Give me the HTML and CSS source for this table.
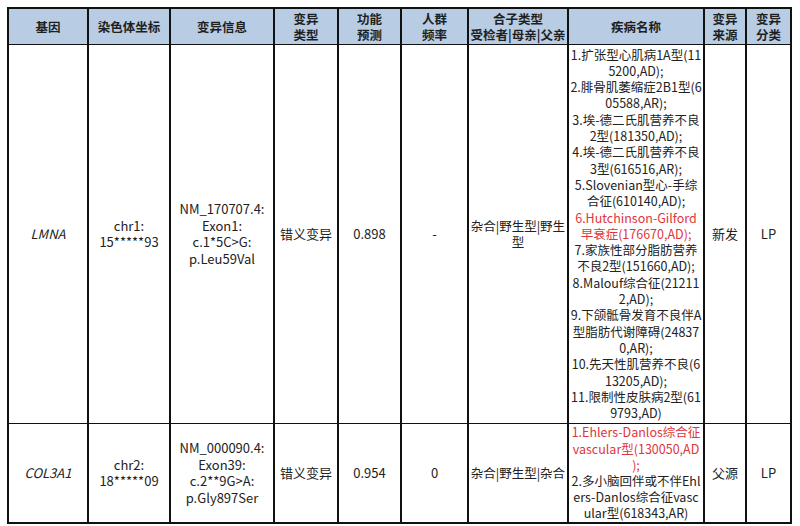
FILE: index.html
```html
<!DOCTYPE html>
<html lang="zh">
<head>
<meta charset="utf-8">
<link rel="stylesheet" href="styles.css">
</head>
<body>
<table class="grid">
<colgroup>
<col class="c1"><col class="c2"><col class="c3"><col class="c4"><col class="c5"><col class="c6"><col class="c7"><col class="c8"><col class="c9"><col class="c10">
</colgroup>
<thead>
<tr>
<th>基因</th>
<th>染色体坐标</th>
<th>变异信息</th>
<th>变异<br>类型</th>
<th>功能<br>预测</th>
<th>人群<br>频率</th>
<th>合子类型<br>受检者|母亲|父亲</th>
<th>疾病名称</th>
<th>变异<br>来源</th>
<th>变异<br>分类</th>
</tr>
</thead>
<tbody>
<tr class="r1">
<td class="gene">LMNA</td>
<td>chr1:<br>15*****93</td>
<td>NM_170707.4:<br>Exon1:<br>c.1*5C&gt;G:<br>p.Leu59Val</td>
<td>错义变异</td>
<td>0.898</td>
<td>-</td>
<td class="zyg">杂合|野生型|野生<br>型</td>
<td class="dis">1.扩张型心肌病1A型(11<br>5200,AD);<br>2.腓骨肌萎缩症2B1型(6<br>05588,AR);<br>3.埃-德二氏肌营养不良<br>2型(181350,AD);<br>4.埃-德二氏肌营养不良<br>3型(616516,AR);<br>5.Slovenian型心-手综<br>合征(610140,AD);<br><span class="red">6.Hutchinson-Gilford<br>早衰症(176670,AD);</span><br>7.家族性部分脂肪营养<br>不良2型(151660,AD);<br>8.Malouf综合征(21211<br>2,AD);<br>9.下颌骶骨发育不良伴A<br>型脂肪代谢障碍(24837<br>0,AR);<br>10.先天性肌营养不良(6<br>13205,AD);<br>11.限制性皮肤病2型(61<br>9793,AD)</td>
<td>新发</td>
<td>LP</td>
</tr>
<tr class="r2">
<td class="gene">COL3A1</td>
<td>chr2:<br>18*****09</td>
<td>NM_000090.4:<br>Exon39:<br>c.2**9G&gt;A:<br>p.Gly897Ser</td>
<td>错义变异</td>
<td>0.954</td>
<td>0</td>
<td class="zyg">杂合|野生型|杂合</td>
<td class="dis"><span class="red">1.Ehlers-Danlos综合征<br>vascular型(130050,AD<br>);</span><br>2.多小脑回伴或不伴Ehl<br>ers-Danlos综合征vasc<br>ular型(618343,AR)</td>
<td>父源</td>
<td>LP</td>
</tr>
</tbody>
</table>
</body>
</html>
```
FILE: styles.css
```css
html, body {
  margin: 0;
  padding: 0;
  background: #ffffff;
}
body {
  padding: 7px 0 0 7px;
  font-family: "Noto Sans CJK SC", "Noto Sans", sans-serif;
  font-size: 12.5px;
  color: #222;
}
.grid {
  border-collapse: collapse;
  table-layout: fixed;
  width: 783px;
  border: 2px solid #111;
}
.c1 { width: 80px; }
.c2 { width: 82px; }
.c3 { width: 104px; }
.c4 { width: 64px; }
.c5 { width: 63px; }
.c6 { width: 67px; }
.c7 { width: 100px; }
.c8 { width: 136px; }
.c9 { width: 42px; }
.c10 { width: 45px; }
.grid th, .grid td {
  border: 1px solid #111;
  border-left-width: 2px;
  text-align: center;
  vertical-align: middle;
  padding: 0 1px;
  line-height: 16.5px;
  white-space: nowrap;
  overflow: hidden;
}
.grid td { font-size: 13px; }
.grid th {
  background: #b8cce4;
  font-weight: bold;
  height: 35px;
  line-height: 16px;
  color: #1f1f1f;
}
.r1 td { height: 378px; }
.r2 td { height: 98px; }
.gene { font-style: italic; }
.grid td.zyg { font-size: 12.5px; }
.grid td.dis { font-size: 12.5px; line-height: 16.3px; }
.grid .r2 td.dis { line-height: 16.2px; }
.red { color: #e0353a; }
```
